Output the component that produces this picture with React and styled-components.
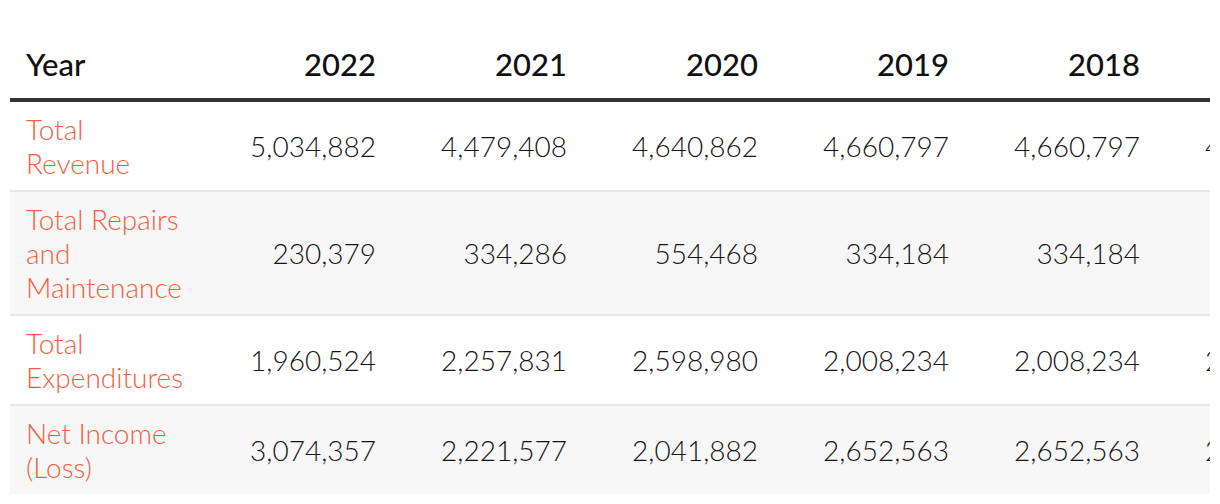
import React from 'react';
import styled, {createGlobalStyle} from 'styled-components';

const GlobalStyle = createGlobalStyle`
  html, body {
    margin: 0;
    padding: 0;
    background: #ffffff;
  }
  body {
    font-family: Lato, "Liberation Sans", sans-serif;
  }
`;

const Wrapper = styled.div`
  padding: 30px 10px 0 10px;
`;

const Scroller = styled.div`
  width: 1200px;
  overflow: hidden;
`;

const Table = styled.table`
  border-collapse: collapse;
  table-layout: fixed;
  width: ${p => p.$cols * 191}px;
`;

const HeadCell = styled.th`
  width: 191px;
  box-sizing: border-box;
  padding: 17px 16px;
  font-size: 31px;
  line-height: 34px;
  font-weight: 500;
  color: #111111;
  text-align: ${p => (p.$first ? 'left' : 'right')};
  border-bottom: 4px solid #333333;
`;

const Row = styled.tr`
  background: ${p => (p.$shaded ? '#f7f7f7' : '#ffffff')};
  border-bottom: 2px solid #e6e6e6;
  &:last-child {
    border-bottom: none;
  }
`;

const Label = styled.td`
  padding: 10px 16px;
  font-size: 28px;
  line-height: 34px;
  font-weight: 300;
  color: #f85d3d;
  text-align: left;
  vertical-align: middle;
`;

const Value = styled.td`
  padding: 10px 16px;
  font-size: 28px;
  line-height: 34px;
  font-weight: 300;
  color: #151515;
  text-align: right;
  vertical-align: middle;
  white-space: nowrap;
`;

const years = ['2022', '2021', '2020', '2019', '2018', '2017'];

const rows = [
  {
    label: 'Total Revenue',
    values: ['5,034,882', '4,479,408', '4,640,862', '4,660,797', '4,660,797', '4,660,797'],
  },
  {
    label: 'Total Repairs and Maintenance',
    values: ['230,379', '334,286', '554,468', '334,184', '334,184', '334,184'],
  },
  {
    label: 'Total Expenditures',
    values: ['1,960,524', '2,257,831', '2,598,980', '2,008,234', '2,008,234', '2,008,234'],
  },
  {
    label: 'Net Income (Loss)',
    values: ['3,074,357', '2,221,577', '2,041,882', '2,652,563', '2,652,563', '2,652,563'],
  },
];

const App = () => {
  return (
    <Wrapper>
      <GlobalStyle />
      <Scroller>
        <Table $cols={years.length + 1}>
          <thead>
            <tr>
              <HeadCell $first>Year</HeadCell>
              {years.map(y => (
                <HeadCell key={y}>{y}</HeadCell>
              ))}
            </tr>
          </thead>
          <tbody>
            {rows.map((r, i) => (
              <Row key={r.label} $shaded={i % 2 === 1}>
                <Label>{r.label}</Label>
                {r.values.map((v, j) => (
                  <Value key={j}>{v}</Value>
                ))}
              </Row>
            ))}
          </tbody>
        </Table>
      </Scroller>
    </Wrapper>
  );
};

export default App;
